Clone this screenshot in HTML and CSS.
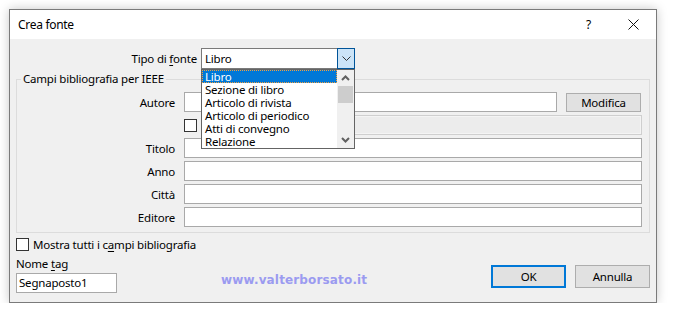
FILE: index.html
```html
<!DOCTYPE html>
<html lang="it">
<head>
<meta charset="utf-8">
<title>Crea fonte</title>
<link rel="stylesheet" href="styles.css">
</head>
<body>
<div class="dialog">
  <div class="titlebar">
    <span class="title">Crea fonte</span>
    <span class="help">?</span>
    <svg class="close" width="11" height="11" viewBox="0 0 11 11"><path d="M0.5 0.5 L10.5 10.5 M10.5 0.5 L0.5 10.5" stroke="#111" stroke-width="1" fill="none"/></svg>
  </div>
  <div class="content">
    <div class="type-row">
      <span class="type-label">Tipo di <u>f</u>onte</span>
      <div class="select">
        <span class="select-value">Libro</span>
        <span class="select-btn">
          <svg width="9" height="6" viewBox="0 0 9 6"><path d="M0.5 0.5 L4.5 4.5 L8.5 0.5" stroke="#333" stroke-width="1" fill="none"/></svg>
        </span>
        <div class="dropdown">
          <ul class="items">
            <li class="sel">Libro</li>
            <li>Sezione di libro</li>
            <li>Articolo di rivista</li>
            <li>Articolo di periodico</li>
            <li>Atti di convegno</li>
            <li>Relazione</li>
          </ul>
          <div class="scrollbar">
            <svg class="arrow" width="9" height="6" viewBox="0 0 9 6"><path d="M1 5 L4.5 1.5 L8 5" stroke="#606060" stroke-width="2" fill="none"/></svg>
            <div class="thumb"></div>
            <div class="track"></div>
            <svg class="arrow" width="9" height="6" viewBox="0 0 9 6"><path d="M1 1 L4.5 4.5 L8 1" stroke="#606060" stroke-width="2" fill="none"/></svg>
          </div>
        </div>
      </div>
    </div>

    <div class="group">
      <div class="legend">Campi bibliografia per IEEE</div>
      <div class="grid">
        <span class="lbl">Autore</span>
        <div class="cell">
          <div class="input grow"></div>
          <div class="btn modifica">Modifica</div>
        </div>
        <span class="lbl"></span>
        <div class="cell">
          <span class="cb"></span>
          <div class="input disabled grow"></div>
        </div>
        <span class="lbl">Titolo</span>
        <div class="input"></div>
        <span class="lbl">Anno</span>
        <div class="input"></div>
        <span class="lbl">Città</span>
        <div class="input"></div>
        <span class="lbl">Editore</span>
        <div class="input"></div>
      </div>
    </div>

    <div class="showall">
      <span class="cb"></span>
      <span>Mostra tutti i c<u>a</u>mpi bibliografia</span>
    </div>

    <div class="bottom">
      <div class="tag">
        <div class="tag-label">Nome <u>t</u>ag</div>
        <div class="input tag-input">Segnaposto1</div>
      </div>
      <div class="watermark">www.valterborsato.it</div>
      <div class="buttons">
        <div class="btn ok">OK</div>
        <div class="btn">Annulla</div>
      </div>
    </div>
  </div>
</div>
</body>
</html>
```
FILE: styles.css
```css
* { box-sizing: border-box; }
html, body { margin: 0; padding: 0; background: #ffffff; }
body {
  font-family: "Noto Sans", "Open Sans", sans-serif;
  font-size: 11.5px;
  letter-spacing: -0.2px;
  color: #000;
}
u { text-decoration-thickness: 1px; text-underline-offset: 2px; }

.dialog {
  margin: 9px 0 0 9px;
  width: 648px;
  height: 294px;
  border: 1px solid #7a7a7a;
  background: #f0f0f0;
  box-shadow: 0 0 10px rgba(0,0,0,0.22);
  display: flex;
  flex-direction: column;
}

.titlebar {
  height: 29px;
  background: #fff;
  display: flex;
  align-items: center;
  padding-left: 8px;
}
.title { flex: 1; font-size: 12px; letter-spacing: -0.3px; }
.help { font-size: 12px; width: 6px; }
.close { margin-left: 36px; margin-right: 17px; display: block; }

.content {
  flex: 1;
  padding: 9px 6px 0 6px;
  display: flex;
  flex-direction: column;
}

.type-row {
  display: flex;
  height: 21px;
  align-items: center;
}
.type-label {
  width: 181px;
  margin-right: 4px;
  text-align: right;
}
.select {
  position: relative;
  width: 154px;
  height: 21px;
  border: 1px solid #7a7a7a;
  background: #fff;
  display: flex;
  align-items: center;
}
.select-value { flex: 1; padding-left: 3px; line-height: 19px; }
.select-btn {
  width: 18px;
  height: 21px;
  margin: -1px -1px -1px 0;
  border: 1px solid #005499;
  background: #cce4f7;
  display: flex;
  align-items: center;
  justify-content: center;
}
.dropdown {
  position: absolute;
  left: -1px;
  top: 20px;
  width: 154px;
  height: 80px;
  border: 1px solid #646464;
  background: #fff;
  display: flex;
  z-index: 5;
}
.items {
  list-style: none;
  margin: 0;
  padding: 0;
  flex: 1;
  overflow: hidden;
}
.items li {
  height: 13px;
  line-height: 13px;
  padding-left: 3px;
  white-space: nowrap;
}
.items li.sel {
  background: #0078d7;
  color: #fff;
  outline: 1px dotted #f0a040;
  outline-offset: -1px;
}
.scrollbar {
  width: 17px;
  background: #f0f0f0;
  display: flex;
  flex-direction: column;
  align-items: center;
}
.scrollbar .arrow { display: block; margin: 5px 0 5px; }
.thumb { width: 15px; height: 17px; background: #cdcdcd; }
.track { flex: 1; }

.group {
  margin-top: 10px;
  border: 1px solid #dcdcdc;
  padding: 0 7px 5px 0;
}
.legend {
  margin: -9px 0 0 4px;
  padding: 0 2px;
  width: fit-content;
  line-height: 16px;
  background: #f0f0f0;
}
.grid {
  margin-top: 5px;
  display: grid;
  grid-template-columns: 158px 1fr;
  grid-auto-rows: 20px;
  column-gap: 9px;
  row-gap: 3px;
}
.lbl {
  text-align: right;
  align-self: center;
}
.cell { display: flex; align-items: center; }
.grow { flex: 1; }
.input {
  height: 20px;
  border: 1px solid #a9a9a9;
  background: #fff;
}
.input.disabled {
  margin-left: 5px;
  background: #ececec;
  border-color: #cfcfcf;
  box-shadow: inset 0 0 0 1px #f4f4f4;
}
.cb {
  width: 13px;
  height: 13px;
  border: 1px solid #333;
  background: #fff;
  flex: none;
}
.btn {
  width: 75px;
  height: 23px;
  border: 1px solid #adadad;
  background: #e1e1e1;
  display: flex;
  align-items: center;
  justify-content: center;
}
.modifica { height: 19px; margin-left: 9px; margin-right: 1px; }

.showall {
  margin-top: 5px;
  display: flex;
  align-items: center;
  gap: 4px;
  height: 13px;
}

.bottom {
  margin-top: 1px;
  display: flex;
  align-items: flex-start;
}
.tag { width: 101px; }
.tag-label { margin-top: 4px; line-height: 16px; }
.tag-input {
  margin-top: 1px;
  width: 101px;
  padding-left: 2px;
  line-height: 18px;
}
.watermark {
  margin-left: 104px;
  margin-top: 21px;
  font-family: "DejaVu Sans", sans-serif;
  font-weight: bold;
  font-size: 12px;
  letter-spacing: 0.15px;
  color: #9b9bf0;
}
.buttons {
  margin-left: auto;
  margin-top: 13px;
  display: flex;
  gap: 9px;
}
.btn.ok { border: 2px solid #0078d7; }
```
